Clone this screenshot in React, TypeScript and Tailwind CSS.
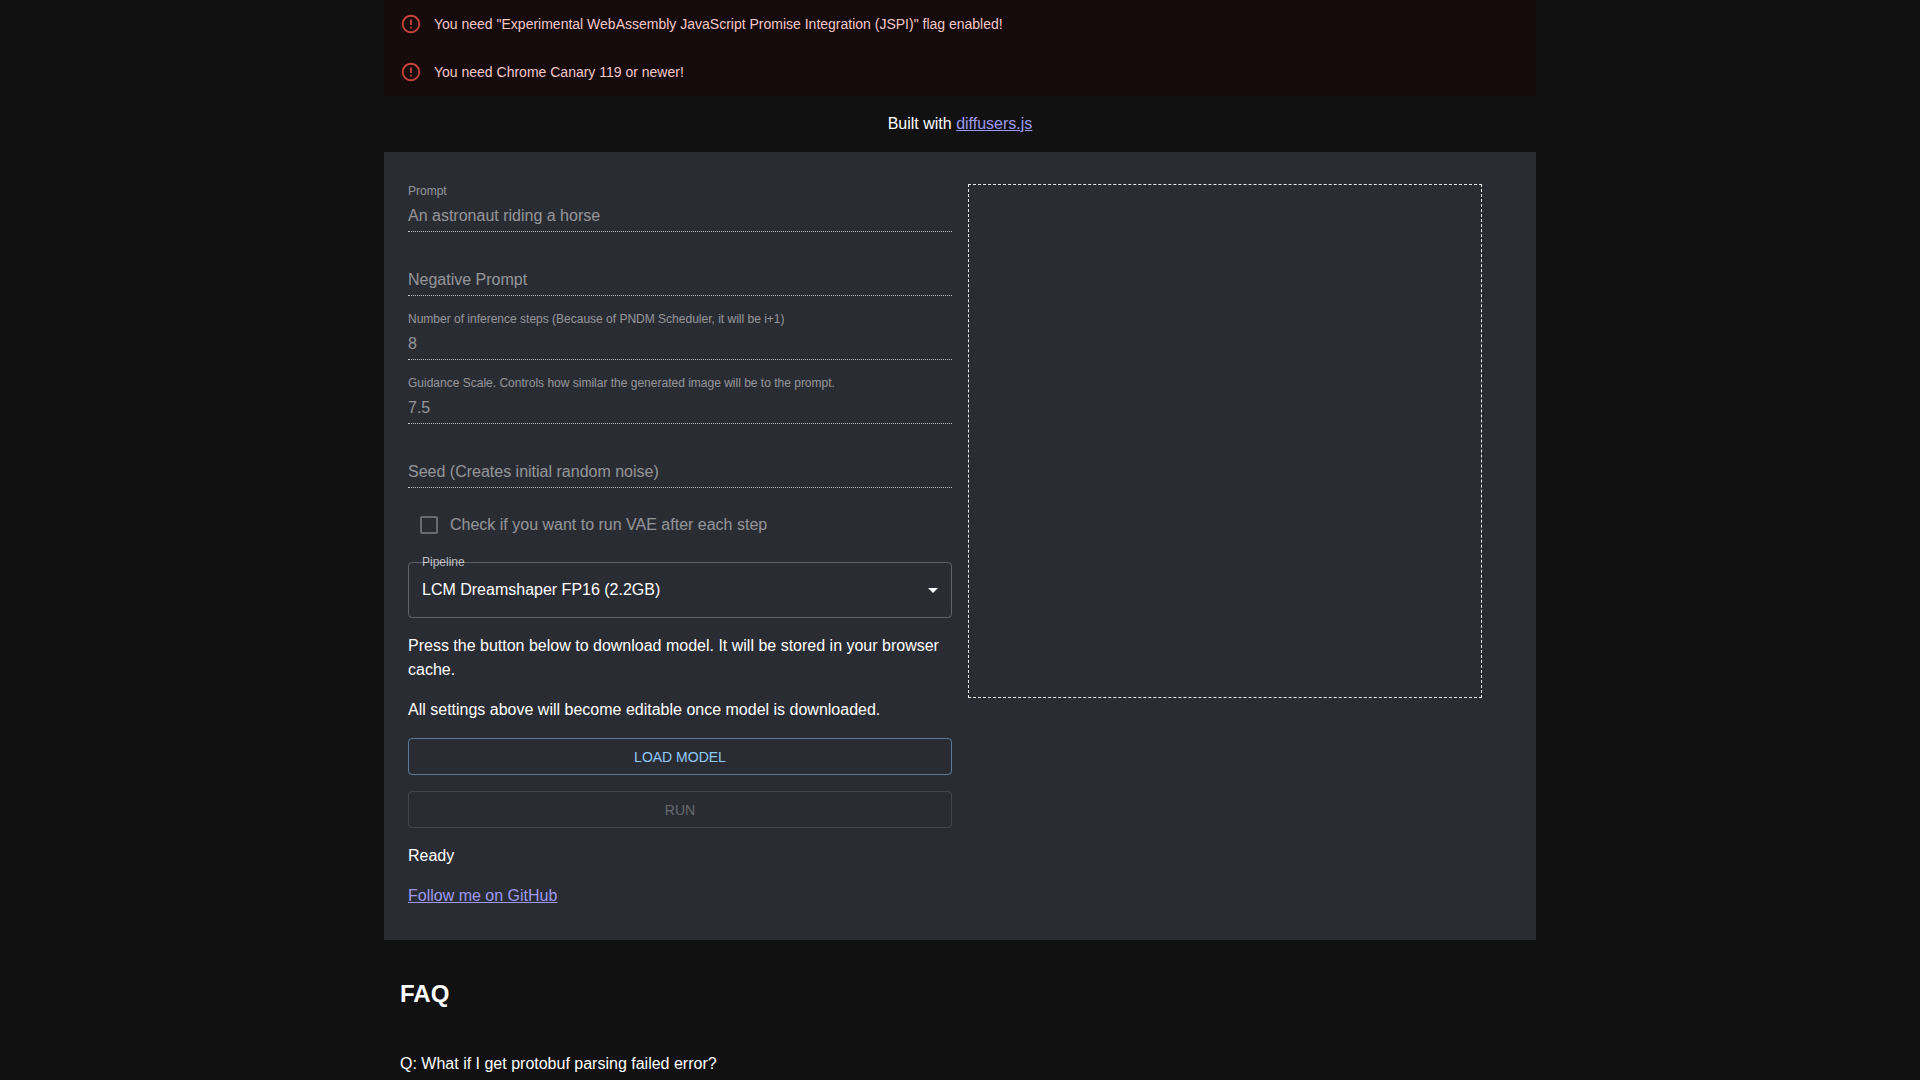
import { clsx } from "clsx";
import { MdArrowDropDown, MdErrorOutline } from "react-icons/md";

const alerts = [
  'You need "Experimental WebAssembly JavaScript Promise Integration (JSPI)" flag enabled!',
  "You need Chrome Canary 119 or newer!",
];

const fields = [
  { id: "prompt", label: "Prompt", value: "An astronaut riding a horse" },
  { id: "negative-prompt", label: "Negative Prompt", value: "" },
  {
    id: "steps",
    label:
      "Number of inference steps (Because of PNDM Scheduler, it will be i+1)",
    value: "8",
  },
  {
    id: "guidance",
    label:
      "Guidance Scale. Controls how similar the generated image will be to the prompt.",
    value: "7.5",
  },
  { id: "seed", label: "Seed (Creates initial random noise)", value: "" },
];

function Alert({ message }: { message: string }) {
  return (
    <div
      role="alert"
      className="flex items-center gap-3 bg-[#160b0b] px-4 py-3.5 text-sm text-[#f4c7c7]"
    >
      <MdErrorOutline className="-my-1 size-[22px] text-[#dc4a42] opacity-90" />
      <span>{message}</span>
    </div>
  );
}

function TextField({
  id,
  label,
  value,
}: {
  id: string;
  label: string;
  value: string;
}) {
  return (
    <div className="relative pt-4">
      {/* The label floats above the line only when there is a value */}
      <label
        htmlFor={id}
        className={clsx(
          "absolute left-0 text-white/50",
          value ? "top-0 text-xs leading-[14px]" : "top-5 text-base leading-6",
        )}
      >
        {label}
      </label>
      <input
        id={id}
        type="text"
        defaultValue={value}
        disabled
        className="block h-8 w-full border-b border-dotted border-white/70 bg-transparent text-base text-white/50"
      />
    </div>
  );
}

export default function App() {
  return (
    <div className="min-h-screen bg-[#111111] font-['Liberation_Sans',Arial,sans-serif] text-base text-white">
      <main className="mx-auto max-w-6xl">
        {alerts.map((message) => (
          <Alert key={message} message={message} />
        ))}

        <p className="py-4 text-center">
          Built with{" "}
          <a href="#diffusers" className="text-[#9e9af0] underline">
            diffusers.js
          </a>
        </p>

        <section className="grid grid-cols-1 gap-4 bg-[#2a2c34] px-6 py-8 md:grid-cols-2">
          {/* Settings */}
          <div className="flex flex-col gap-4">
            {fields.map((field) => (
              <TextField key={field.id} {...field} />
            ))}

            <div className="flex h-[42px] items-center gap-3 px-3">
              <input
                id="run-vae"
                type="checkbox"
                disabled
                className="size-[18px] appearance-none rounded-xs border-2 border-white/30"
              />
              <label htmlFor="run-vae" className="text-white/50">
                Check if you want to run VAE after each step
              </label>
            </div>

            <div className="relative">
              <select
                id="pipeline"
                className="block h-14 w-full appearance-none rounded-sm border border-white/25 bg-transparent px-[13px] text-base text-white"
              >
                <option>LCM Dreamshaper FP16 (2.2GB)</option>
              </select>
              <label
                htmlFor="pipeline"
                className="absolute -top-2 left-3.5 text-xs text-white/70"
              >
                Pipeline
              </label>
              <MdArrowDropDown className="pointer-events-none absolute top-4 right-[7px] size-6" />
            </div>

            <p>
              Press the button below to download model. It will be stored in
              your browser cache.
            </p>
            <p>
              All settings above will become editable once model is downloaded.
            </p>

            <button
              type="button"
              className="h-[37px] rounded-sm border border-[#90caf9]/50 text-sm font-medium text-[#90caf9] uppercase"
            >
              Load model
            </button>
            <button
              type="button"
              disabled
              className="h-[37px] rounded-sm border border-white/12 text-sm font-medium text-white/30 uppercase"
            >
              Run
            </button>

            <p>Ready</p>
            <p>
              <a href="#github" className="text-[#9e9af0] underline">
                Follow me on GitHub
              </a>
            </p>
          </div>

          {/* Generated image */}
          <div>
            <canvas
              width={512}
              height={512}
              className="border border-dashed border-white/90"
            />
          </div>
        </section>

        <section className="px-4 pt-9">
          <h2 className="text-2xl leading-9 font-bold">FAQ</h2>
          <p className="pt-10">
            Q: What if I get protobuf parsing failed error?
          </p>
        </section>
      </main>
    </div>
  );
}
